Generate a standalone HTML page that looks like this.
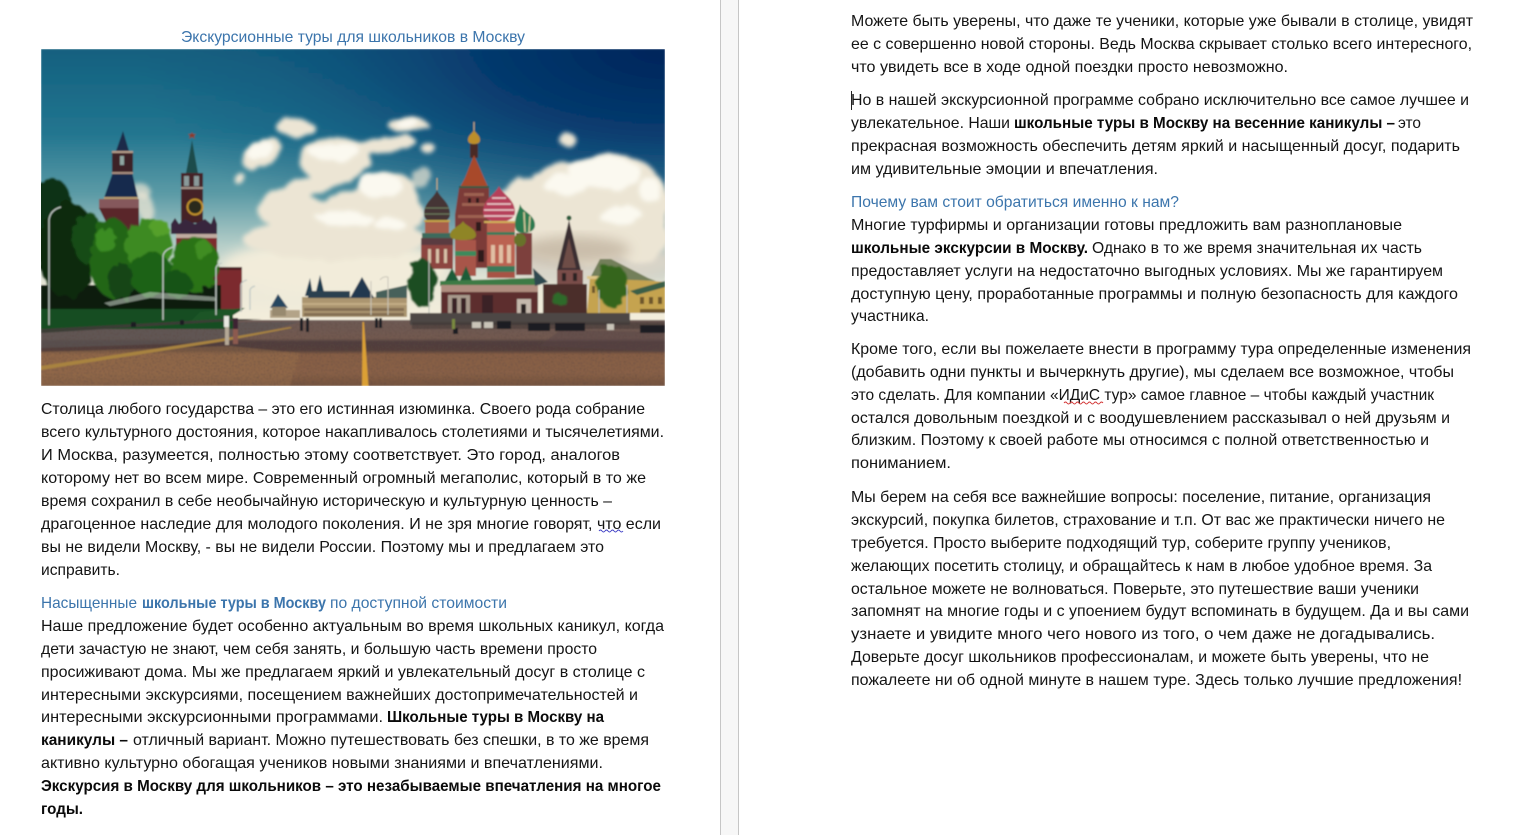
<!DOCTYPE html>
<html lang="ru"><head><meta charset="utf-8"><title>Экскурсионные туры для школьников в Москву</title>
<style>
html,body{margin:0;padding:0;background:#fff;width:1517px;height:835px;overflow:hidden}
svg{display:block}
text{font-family:"Liberation Sans","DejaVu Sans",sans-serif;font-size:16px;fill:#141414}
.b{font-weight:bold;fill:#0a0a0a}
.h{fill:#3c75ac}
.hb{fill:#3c75ac;font-weight:bold}
</style></head><body>
<svg xmlns="http://www.w3.org/2000/svg" width="1517" height="835" viewBox="0 0 1517 835">
<defs>
<linearGradient id="sky" x1="0" y1="0" x2="0" y2="1"><stop offset="0" stop-color="#13607f"/><stop offset=".3" stop-color="#22758f"/><stop offset=".52" stop-color="#5c9ba6"/><stop offset=".7" stop-color="#b4cdc8"/><stop offset=".85" stop-color="#ebe8d8"/><stop offset="1" stop-color="#f6efdc"/></linearGradient>
<radialGradient id="navy" cx="1" cy="0" r=".85"><stop offset="0" stop-color="#01245a"/><stop offset=".35" stop-color="#04356b" stop-opacity=".9"/><stop offset=".75" stop-color="#0a4a78" stop-opacity=".3"/><stop offset="1" stop-color="#0a4a78" stop-opacity="0"/></radialGradient>
<linearGradient id="ground" x1="0" y1="0" x2="0" y2="1"><stop offset="0" stop-color="#6d5a54"/><stop offset=".28" stop-color="#735a50"/><stop offset=".33" stop-color="#4f3d3c"/><stop offset=".46" stop-color="#523e3a"/><stop offset=".52" stop-color="#885f44"/><stop offset=".8" stop-color="#8a6146"/><stop offset="1" stop-color="#75533e"/></linearGradient>
<filter id="cl" x="-20%" y="-20%" width="140%" height="140%"><feTurbulence type="fractalNoise" baseFrequency=".04" numOctaves="3" seed="4" result="n"/><feDisplacementMap in="SourceGraphic" in2="n" scale="12"/><feGaussianBlur stdDeviation="2.2"/></filter>
<filter id="cs" x="-20%" y="-20%" width="140%" height="140%"><feGaussianBlur stdDeviation="6"/></filter>
<filter id="tr" x="-10%" y="-10%" width="120%" height="120%"><feTurbulence type="fractalNoise" baseFrequency=".1" numOctaves="2" seed="9" result="n"/><feDisplacementMap in="SourceGraphic" in2="n" scale="11"/><feGaussianBlur stdDeviation=".7"/></filter>
<filter id="nz" x="0" y="0" width="100%" height="100%"><feTurbulence type="fractalNoise" baseFrequency=".7" numOctaves="2" seed="2"/><feColorMatrix values="0 0 0 0 .1 0 0 0 0 .06 0 0 0 0 .05 0 0 0 2 -.95"/></filter>
<filter id="s" x="-5%" y="-5%" width="110%" height="110%"><feGaussianBlur stdDeviation=".7"/></filter>
<clipPath id="pic"><rect x="41" y="49" width="624" height="337"/></clipPath>
</defs>
<rect width="1517" height="835" fill="#fff"/>
<rect x="720" y="0" width="19" height="835" fill="#f7f7f7"/>
<rect x="720" y="0" width="1" height="835" fill="#c6c6c6"/>
<rect x="738" y="0" width="1" height="835" fill="#c6c6c6"/>

<g clip-path="url(#pic)"><g filter="url(#s)">
<rect x="41" y="49" width="624" height="280" fill="url(#sky)"/>
<rect x="41" y="49" width="624" height="280" fill="url(#navy)"/>
<g filter="url(#cs)"><ellipse cx="335" cy="268" rx="115" ry="30" fill="#f2ecda"/><ellipse cx="590" cy="262" rx="90" ry="22" fill="#d9d4c8"/></g>
<!-- clouds: cream base -->
<g fill="#ece5d4" filter="url(#cl)">
<ellipse cx="335" cy="240" rx="92" ry="20"/><ellipse cx="372" cy="215" rx="52" ry="28"/><ellipse cx="325" cy="222" rx="55" ry="20"/>
<ellipse cx="292" cy="212" rx="34" ry="17"/><ellipse cx="388" cy="196" rx="30" ry="24"/>
<ellipse cx="335" cy="160" rx="36" ry="23"/><ellipse cx="302" cy="190" rx="38" ry="11" transform="rotate(-22 302 190)"/>
<ellipse cx="385" cy="145" rx="30" ry="8" transform="rotate(-10 385 145)"/><ellipse cx="408" cy="125" rx="20" ry="8"/>
<ellipse cx="262" cy="154" rx="22" ry="13" transform="rotate(-30 262 154)"/><ellipse cx="296" cy="128" rx="19" ry="9"/><ellipse cx="238" cy="177" rx="7" ry="5"/>
<ellipse cx="428" cy="148" rx="7" ry="5"/>
<ellipse cx="580" cy="215" rx="84" ry="48"/><ellipse cx="610" cy="182" rx="48" ry="28"/><ellipse cx="560" cy="182" rx="32" ry="18"/><ellipse cx="645" cy="200" rx="24" ry="28"/>
<ellipse cx="533" cy="195" rx="16" ry="14"/><ellipse cx="640" cy="240" rx="30" ry="24"/><ellipse cx="569" cy="141" rx="7" ry="8"/>
<ellipse cx="422" cy="178" rx="10" ry="12" opacity=".7"/>
<ellipse cx="138" cy="192" rx="14" ry="7" opacity=".7"/><ellipse cx="145" cy="208" rx="8" ry="14" opacity=".75"/>
</g>
<!-- cloud highlights -->
<g fill="#fbf9f0" filter="url(#cl)">
<ellipse cx="381" cy="186" rx="22" ry="13"/><ellipse cx="345" cy="218" rx="28" ry="8"/><ellipse cx="390" cy="225" rx="16" ry="6"/>
<ellipse cx="335" cy="152" rx="26" ry="10"/><ellipse cx="260" cy="150" rx="14" ry="8" transform="rotate(-25 260 150)"/><ellipse cx="408" cy="124" rx="12" ry="5"/>
<ellipse cx="605" cy="172" rx="36" ry="16"/><ellipse cx="565" cy="185" rx="22" ry="10"/><ellipse cx="620" cy="215" rx="22" ry="10"/><ellipse cx="650" cy="190" rx="12" ry="12"/>
</g>
<!-- cloud shadow -->
<g filter="url(#cs)"><ellipse cx="575" cy="250" rx="55" ry="14" fill="#b8a995" opacity=".65"/></g>

<!-- ground -->
<rect x="41" y="320" width="624" height="66" fill="url(#ground)"/>
<polygon points="41,322 300,322 225,342 41,348" fill="#5b5556" opacity=".75"/>
<polygon points="560,330 665,332 665,352 540,346" fill="#574448" opacity=".45"/>
<polygon points="41,352 230,346 300,353 290,386 41,386" fill="#9a7049" opacity=".5"/>
<rect x="41" y="322" width="624" height="64" filter="url(#nz)"/>
<!-- GUM -->
<rect x="270" y="310" width="30" height="8" fill="#b3a388"/>
<rect x="302" y="297" width="105" height="20" fill="#ab9570"/>
<rect x="302" y="303" width="105" height="2" fill="#cdb890" opacity=".7"/>
<g fill="#55432f" opacity=".45"><rect x="304" y="308" width="100" height="3"/><rect x="304" y="313" width="100" height="3"/></g>
<polygon points="278,294 288,308 270,308" fill="#274660"/><rect x="272" y="307" width="14" height="9" fill="#988a70"/>
<polygon points="310,278 313,296 305,296" fill="#1d3a50"/><polygon points="320,275 325,296 315,296" fill="#1d3a50"/>
<rect x="308" y="291" width="42" height="7" fill="#2b3f50"/>
<polygon points="362,277 374,298 350,298" fill="#23394f"/>
<polygon points="376,292 407,285 407,298 376,298" fill="#46605a"/>
<path d="M380 280q3-4 8-3M388 277v38M371 281v34" fill="none" stroke="#c9c5b8" stroke-width="1"/>
<!-- Kremlin towers -->
<rect x="112" y="152" width="21" height="20" fill="#3d2228"/><rect x="120" y="156" width="4" height="9" fill="#8fa6a2"/>
<rect x="112" y="151" width="21" height="2" fill="#b69c88"/>
<polygon points="123,131 129,151 116,151" fill="#1a2a48"/>
<polygon points="113,172 132,172 138,198 104,198" fill="#16294d"/>
<rect x="112" y="172" width="21" height="2" fill="#a88f80"/>
<rect x="104" y="197" width="34" height="2" fill="#b69c70"/>
<rect x="99" y="199" width="40" height="10" fill="#85595b"/><polygon points="99,208 139,208 139,240 115,240" fill="#5a282b"/>
<rect x="181" y="173" width="22" height="50" fill="#452127"/>
<rect x="184" y="176" width="5" height="10" fill="#8a9a9a"/><rect x="194" y="176" width="5" height="10" fill="#8a9a9a"/>
<rect x="181" y="187" width="22" height="2" fill="#a59388"/>
<polygon points="192,140 198,173 186,173" fill="#1f4c4c"/>
<path d="M192 132l1 2h3l-2 2 1 3-3-2-3 2 1-3-2-2h3z" fill="#8a3d2a"/>
<circle cx="195" cy="207" r="7.5" fill="#2c2a1c" stroke="#c0902a" stroke-width="2"/>
<path d="M171 224l4-6 4 6 6-5 10 5 10-5 6 5 3-8 3 8v10h-46z" fill="#37283c"/>
<rect x="176" y="234" width="41" height="4" fill="#c0aca0"/>
<rect x="176" y="238" width="41" height="32" fill="#7e2b2f"/>
<rect x="217" y="267" width="25" height="44" fill="#7c2a2e"/>
<rect x="217" y="267" width="25" height="3" fill="#4e1e22"/>
<rect x="180" y="270" width="37" height="40" fill="#5d2a2e"/>
<!-- trees -->
<rect x="41" y="285" width="180" height="30" fill="#0d1d10"/>
<g filter="url(#tr)">
<ellipse cx="52" cy="208" rx="20" ry="30" fill="#0f3012"/>
<ellipse cx="68" cy="250" rx="30" ry="48" fill="#0c2b10"/>
<ellipse cx="88" cy="238" rx="15" ry="26" fill="#164c17"/>
<ellipse cx="112" cy="258" rx="22" ry="40" fill="#216617"/>
<ellipse cx="122" cy="282" rx="14" ry="18" fill="#134513"/>
<ellipse cx="148" cy="245" rx="24" ry="26" fill="#3c8a20"/>
<ellipse cx="152" cy="275" rx="22" ry="22" fill="#1d6216"/>
<ellipse cx="195" cy="265" rx="24" ry="28" fill="#2a7316"/>
<ellipse cx="178" cy="285" rx="14" ry="14" fill="#185213"/>
<ellipse cx="106" cy="240" rx="11" ry="13" fill="#3a8c22"/>
<ellipse cx="160" cy="228" rx="10" ry="8" fill="#55a02c"/>
<ellipse cx="203" cy="250" rx="9" ry="10" fill="#3f8d20"/>
</g>
<rect x="41" y="309" width="192" height="20" fill="#174d24"/>
<polygon points="200,312 245,308 225,320 190,322" fill="#1d5526"/>
<polygon points="41,329 225,319 262,319 41,333" fill="#3a3c36"/>
<polygon points="104,303 150,292 215,297 216,301 150,298 110,306" fill="#d4dad0" opacity=".55"/>
<!-- lamps -->
<path d="M49 325V220q1-10 12-13M163 320V256q1-6 10-9M216 315V268q1-4 6-5M241 312V285q1-4 6-5M250 310V290q1-3 5-4" fill="none" stroke="#c2cbc6" stroke-width="1.3"/>
<!-- St Basil -->
<path d="M474 122v10" stroke="#c9b083" stroke-width="1"/>
<path d="M474 130c2 4 6 5 6 10 0 3-3 4-6 4s-6-1-6-4c0-5 4-6 6-10z" fill="#bd8e2b"/>
<rect x="470" y="144" width="8" height="14" fill="#4a2a28"/>
<polygon points="474,155 484,178 489,189 459,189 465,178" fill="#a8492a"/>
<rect x="459" y="186" width="30" height="3" fill="#2e5c42"/>
<polygon points="459,188 489,188 490,268 455,268 455,215" fill="#7c3a38"/>
<g fill="#a9705a" opacity=".75"><rect x="464" y="193" width="20" height="3"/><rect x="462" y="203" width="24" height="3"/><rect x="458" y="215" width="30" height="3"/></g>
<g fill="#2d1a1c"><rect x="468" y="198" width="3" height="5"/><rect x="476" y="198" width="3" height="5"/><rect x="476" y="222" width="5" height="9"/><rect x="478" y="250" width="6" height="12"/></g>
<!-- left chapel -->
<path d="M421 243q1-8 16-10 15 2 16 10v26h-32z" fill="#8d4440"/>
<rect x="425" y="222" width="24" height="14" fill="#a85f4c"/>
<rect x="422" y="233" width="30" height="5" fill="#3d6a5c"/>
<rect x="421" y="238" width="32" height="7" fill="#5a3b40"/>
<g fill="#d8c2a8"><rect x="428" y="249" width="3" height="14"/><rect x="436" y="249" width="3" height="14"/><rect x="444" y="249" width="3" height="14"/></g>
<path d="M437 190c3 8 13 12 13 24 0 6-5 8-13 8s-13-2-13-8c0-12 10-16 13-24z" fill="#443434"/>
<path d="M425 208h24M424 214h26" stroke="#6b7a5c" stroke-width="1.2"/>
<rect x="424" y="220" width="26" height="2" fill="#c3a44a"/>
<path d="M437 178v12" stroke="#c9b083" stroke-width="1"/>
<!-- pink -->
<rect x="487" y="222" width="28" height="55" fill="#bb6251"/>
<rect x="487" y="266" width="28" height="6" fill="#3b7a5a"/>
<rect x="487" y="272" width="28" height="6" fill="#a75244"/>
<g fill="#e0c0a4"><rect x="491" y="245" width="4" height="18"/><rect x="499" y="245" width="4" height="18"/><rect x="507" y="245" width="4" height="18"/></g>
<rect x="487" y="232" width="28" height="3" fill="#3b7a5a"/>
<path d="M499 186c3 8 16 13 16 26 0 6-7 10-16 10s-16-4-16-10c0-13 13-18 16-26z" fill="#b5405a"/>
<path d="M492 198h14M487 204h24M484 210h30M484 216h30" stroke="#eed0d0" stroke-width="1.6"/>
<rect x="484" y="221" width="31" height="2" fill="#d2b05a"/>
<!-- green -->
<rect x="516" y="233" width="16" height="42" fill="#7d3f3c"/>
<path d="M520 204c2 8 15 10 15 21 0 6-6 8-12 8s-8-3-8-8c0-10 4-14 5-21z" fill="#2c7a50"/>
<path d="M524 212l1 20M530 216l-1 16" stroke="#cfc79b" stroke-width="1.6"/>
<rect x="455" y="240" width="21" height="36" fill="#a8554a"/>
<rect x="455" y="251" width="21" height="5" fill="#3d8a5c"/>
<path d="M463 221c2 5 13 7 13 14 0 4-5 5-13 5s-13-1-13-5c0-7 11-9 13-14z" fill="#8f8528"/>
<ellipse cx="520" cy="240" rx="6" ry="6.5" fill="#68722c"/>
<polygon points="452,268 459,281 445,281" fill="#1e5c38"/>
<polygon points="466,266 474,285 458,285" fill="#1e5c38"/>
<polygon points="440,281 535,278 540,285 440,286" fill="#3c7a45"/>
<rect x="441" y="285" width="97" height="28" fill="#5d2d2e"/>
<rect x="441" y="285" width="97" height="7" fill="#b08e80"/>
<g fill="#a89a8c"><rect x="448" y="295" width="22" height="18"/></g>
<g fill="#3a2426"><rect x="452" y="298" width="5" height="15"/><rect x="461" y="298" width="5" height="15"/><rect x="482" y="295" width="11" height="18"/></g>
<rect x="517" y="299" width="14" height="14" fill="#c4b8ac"/><rect x="521" y="304" width="5" height="9" fill="#2a2224"/>
<!-- right tower -->
<circle cx="569" cy="218" r="2.5" fill="#2b5b3a"/>
<polygon points="569,220 581,270 557,270" fill="#3a2e32"/>
<polygon points="569,238 576,268 562,268" fill="#6e4e46"/>
<rect x="557" y="270" width="26" height="15" fill="#7a4d48"/>
<g fill="#2a2224"><rect x="562" y="273" width="4" height="8"/><rect x="573" y="273" width="4" height="8"/></g>
<rect x="543" y="284" width="44" height="29" fill="#4b2d2c"/>
<polygon points="533,268 548,282 535,286" fill="#2f4a4f"/>
<!-- yellow building -->
<polygon points="590,276 665,282 665,313 587,313" fill="#c5a34f"/>
<polygon points="600,259 611,259 648,278 656,281 590,278" fill="#737f5a"/>
<polygon points="630,291 665,281 665,287 637,295" fill="#3b5f46"/>
<rect x="587" y="276" width="24" height="3" fill="#ddc588"/>
<g fill="#6d542c"><rect x="592" y="286" width="3" height="7"/><rect x="600" y="286" width="3" height="7"/><rect x="640" y="297" width="4" height="7"/><rect x="649" y="297" width="4" height="7"/><rect x="658" y="297" width="4" height="7"/><rect x="640" y="309" width="25" height="4"/></g>
<g filter="url(#tr)">
<ellipse cx="612" cy="285" rx="15" ry="22" fill="#35651f"/>
<ellipse cx="422" cy="283" rx="14" ry="24" fill="#1e4e24"/>
<ellipse cx="560" cy="300" rx="8" ry="6" fill="#2d6a2a"/>
</g>
<path d="M429 320V260M627 322V285M599 320V290" stroke="#b6bbb4" stroke-width="1"/>
<rect x="410" y="313" width="220" height="12" fill="#4e4644"/>
<rect x="412" y="322" width="253" height="7" fill="#3b3232" opacity=".5"/>
<!-- cars -->
<g fill="#1f1c20"><rect x="497" y="321" width="14" height="8"/><rect x="528" y="323" width="22" height="8"/><rect x="555" y="323" width="30" height="8"/><rect x="640" y="325" width="25" height="8"/></g>
<g fill="#c9c4b8"><rect x="472" y="322" width="9" height="6"/><rect x="484" y="322" width="9" height="6"/><rect x="607" y="324" width="7" height="6"/></g>
<!-- yellow lines -->
<polygon points="362.5,322 364,322 368.5,386 362,386" fill="#dba035"/>
<polygon points="41,366 220,339 290,327 292,328 225,341 41,370" fill="#a8833f"/>
<!-- people -->
<rect x="224" y="316" width="5" height="11" fill="#e8e8e0"/><rect x="225" y="327" width="4" height="18" fill="#b5a896"/>
<rect x="233" y="318" width="5" height="11" fill="#3e2230"/><rect x="233" y="329" width="5" height="15" fill="#8c5a50"/>
<g fill="#1e1c20"><rect x="300" y="318" width="3" height="13"/><rect x="306" y="318" width="3" height="14"/><rect x="375" y="318" width="3" height="10"/><rect x="379" y="318" width="3" height="10"/><rect x="453" y="328" width="5" height="6"/><rect x="131" y="322" width="5" height="5"/><rect x="180" y="320" width="4" height="5"/></g>
<rect x="452" y="319" width="3" height="10" fill="#7a8a40"/>
</g></g>

<!-- Left column -->
<text x="181" y="42" textLength="344" lengthAdjust="spacingAndGlyphs" class="h">Экскурсионные туры для школьников в Москву</text>
<text x="41" y="414" textLength="604" lengthAdjust="spacingAndGlyphs">Столица любого государства – это его истинная изюминка. Своего рода собрание</text>
<text x="41" y="437" textLength="623" lengthAdjust="spacingAndGlyphs">всего культурного достояния, которое накапливалось столетиями и тысячелетиями.</text>
<text x="41" y="460" textLength="579" lengthAdjust="spacingAndGlyphs">И Москва, разумеется, полностью этому соответствует. Это город, аналогов</text>
<text x="41" y="483" textLength="605" lengthAdjust="spacingAndGlyphs">которому нет во всем мире. Современный огромный мегаполис, который в то же</text>
<text x="41" y="506" textLength="571" lengthAdjust="spacingAndGlyphs">время сохранил в себе необычайную историческую и культурную ценность –</text>
<text x="41" y="529" textLength="620" lengthAdjust="spacingAndGlyphs">драгоценное наследие для молодого поколения. И не зря многие говорят, что если</text>
<text x="41" y="552" textLength="563" lengthAdjust="spacingAndGlyphs">вы не видели Москву, - вы не видели России. Поэтому мы и предлагаем это</text>
<text x="41" y="575" textLength="79" lengthAdjust="spacingAndGlyphs">исправить.</text>
<text x="41" y="608" textLength="96" lengthAdjust="spacingAndGlyphs" class="h">Насыщенные</text>
<text x="142" y="608" textLength="184" lengthAdjust="spacingAndGlyphs" class="hb">школьные туры в Москву</text>
<text x="330" y="608" textLength="177" lengthAdjust="spacingAndGlyphs" class="h">по доступной стоимости</text>
<text x="41" y="631" textLength="623" lengthAdjust="spacingAndGlyphs">Наше предложение будет особенно актуальным во время школьных каникул, когда</text>
<text x="41" y="654" textLength="556" lengthAdjust="spacingAndGlyphs">дети зачастую не знают, чем себя занять, и большую часть времени просто</text>
<text x="41" y="677" textLength="604" lengthAdjust="spacingAndGlyphs">просиживают дома. Мы же предлагаем яркий и увлекательный досуг в столице с</text>
<text x="41" y="700" textLength="597" lengthAdjust="spacingAndGlyphs">интересными экскурсиями, посещением важнейших достопримечательностей и</text>
<text x="41" y="722" textLength="342" lengthAdjust="spacingAndGlyphs">интересными экскурсионными программами.</text>
<text x="387" y="722" textLength="217" lengthAdjust="spacingAndGlyphs" class="b">Школьные туры в Москву на</text>
<text x="41" y="745" textLength="87" lengthAdjust="spacingAndGlyphs" class="b">каникулы –</text>
<text x="133" y="745" textLength="516" lengthAdjust="spacingAndGlyphs">отличный вариант. Можно путешествовать без спешки, в то же время</text>
<text x="41" y="768" textLength="562" lengthAdjust="spacingAndGlyphs">активно культурно обогащая учеников новыми знаниями и впечатлениями.</text>
<text x="41" y="791" textLength="620" lengthAdjust="spacingAndGlyphs" class="b">Экскурсия в Москву для школьников – это незабываемые впечатления на многое</text>
<text x="41" y="814" textLength="42" lengthAdjust="spacingAndGlyphs" class="b">годы.</text>
<path d="M599 531q1.5-2 3 0t3 0 3 0 3 0 3 0 3 0 3 0 3 0" fill="none" stroke="#3b3bc4" stroke-width=".9"/>

<!-- Right column -->
<text x="851" y="26" textLength="622" lengthAdjust="spacingAndGlyphs">Можете быть уверены, что даже те ученики, которые уже бывали в столице, увидят</text>
<text x="851" y="49" textLength="621" lengthAdjust="spacingAndGlyphs">ее с совершенно новой стороны. Ведь Москва скрывает столько всего интересного,</text>
<text x="851" y="72" textLength="437" lengthAdjust="spacingAndGlyphs">что увидеть все в ходе одной поездки просто невозможно.</text>
<rect x="851" y="91" width="1" height="19" fill="#222"/>
<text x="851" y="105" textLength="618" lengthAdjust="spacingAndGlyphs">Но в нашей экскурсионной программе собрано исключительно все самое лучшее и</text>
<text x="851" y="128" textLength="159" lengthAdjust="spacingAndGlyphs">увлекательное. Наши</text>
<text x="1014" y="128" textLength="381" lengthAdjust="spacingAndGlyphs" class="b">школьные туры в Москву на весенние каникулы –</text>
<text x="1398" y="128" textLength="23" lengthAdjust="spacingAndGlyphs">это</text>
<text x="851" y="151" textLength="609" lengthAdjust="spacingAndGlyphs">прекрасная возможность обеспечить детям яркий и насыщенный досуг, подарить</text>
<text x="851" y="174" textLength="307" lengthAdjust="spacingAndGlyphs">им удивительные эмоции и впечатления.</text>
<text x="851" y="207" textLength="328" lengthAdjust="spacingAndGlyphs" class="h">Почему вам стоит обратиться именно к нам?</text>
<text x="851" y="230" textLength="551" lengthAdjust="spacingAndGlyphs">Многие турфирмы и организации готовы предложить вам разноплановые</text>
<text x="851" y="253" textLength="237" lengthAdjust="spacingAndGlyphs" class="b">школьные экскурсии в Москву.</text>
<text x="1092" y="253" textLength="330" lengthAdjust="spacingAndGlyphs">Однако в то же время значительная их часть</text>
<text x="851" y="276" textLength="592" lengthAdjust="spacingAndGlyphs">предоставляет услуги на недостаточно выгодных условиях. Мы же гарантируем</text>
<text x="851" y="299" textLength="607" lengthAdjust="spacingAndGlyphs">доступную цену, проработанные программы и полную безопасность для каждого</text>
<text x="851" y="321" textLength="78" lengthAdjust="spacingAndGlyphs">участника.</text>
<text x="851" y="354" textLength="620" lengthAdjust="spacingAndGlyphs">Кроме того, если вы пожелаете внести в программу тура определенные изменения</text>
<text x="851" y="377" textLength="603" lengthAdjust="spacingAndGlyphs">(добавить одни пункты и вычеркнуть другие), мы сделаем все возможное, чтобы</text>
<text x="851" y="400" textLength="583" lengthAdjust="spacingAndGlyphs">это сделать. Для компании «ИДиС тур» самое главное – чтобы каждый участник</text>
<path d="M1064 403q1.5-2 3 0t3 0 3 0 3 0 3 0 3 0 3 0 3 0 3 0 3 0 3 0 3 0 3 0" fill="none" stroke="#d23030" stroke-width=".9"/>
<text x="851" y="423" textLength="599" lengthAdjust="spacingAndGlyphs">остался довольным поездкой и с воодушевлением рассказывал о ней друзьям и</text>
<text x="851" y="445" textLength="578" lengthAdjust="spacingAndGlyphs">близким. Поэтому к своей работе мы относимся с полной ответственностью и</text>
<text x="851" y="468" textLength="100" lengthAdjust="spacingAndGlyphs">пониманием.</text>
<text x="851" y="502" textLength="580" lengthAdjust="spacingAndGlyphs">Мы берем на себя все важнейшие вопросы: поселение, питание, организация</text>
<text x="851" y="525" textLength="594" lengthAdjust="spacingAndGlyphs">экскурсий, покупка билетов, страхование и т.п. От вас же практически ничего не</text>
<text x="851" y="548" textLength="540" lengthAdjust="spacingAndGlyphs">требуется. Просто выберите подходящий тур, соберите группу учеников,</text>
<text x="851" y="571" textLength="581" lengthAdjust="spacingAndGlyphs">желающих посетить столицу, и обращайтесь к нам в любое удобное время. За</text>
<text x="851" y="594" textLength="568" lengthAdjust="spacingAndGlyphs">остальное можете не волноваться. Поверьте, это путешествие ваши ученики</text>
<text x="851" y="616" textLength="618" lengthAdjust="spacingAndGlyphs">запомнят на многие годы и с упоением будут вспоминать в будущем. Да и вы сами</text>
<text x="851" y="639" textLength="584" lengthAdjust="spacingAndGlyphs">узнаете и увидите много чего нового из того, о чем даже не догадывались.</text>
<text x="851" y="662" textLength="578" lengthAdjust="spacingAndGlyphs">Доверьте досуг школьников профессионалам, и можете быть уверены, что не</text>
<text x="851" y="685" textLength="611" lengthAdjust="spacingAndGlyphs">пожалеете ни об одной минуте в нашем туре. Здесь только лучшие предложения!</text>
</svg>
</body></html>
